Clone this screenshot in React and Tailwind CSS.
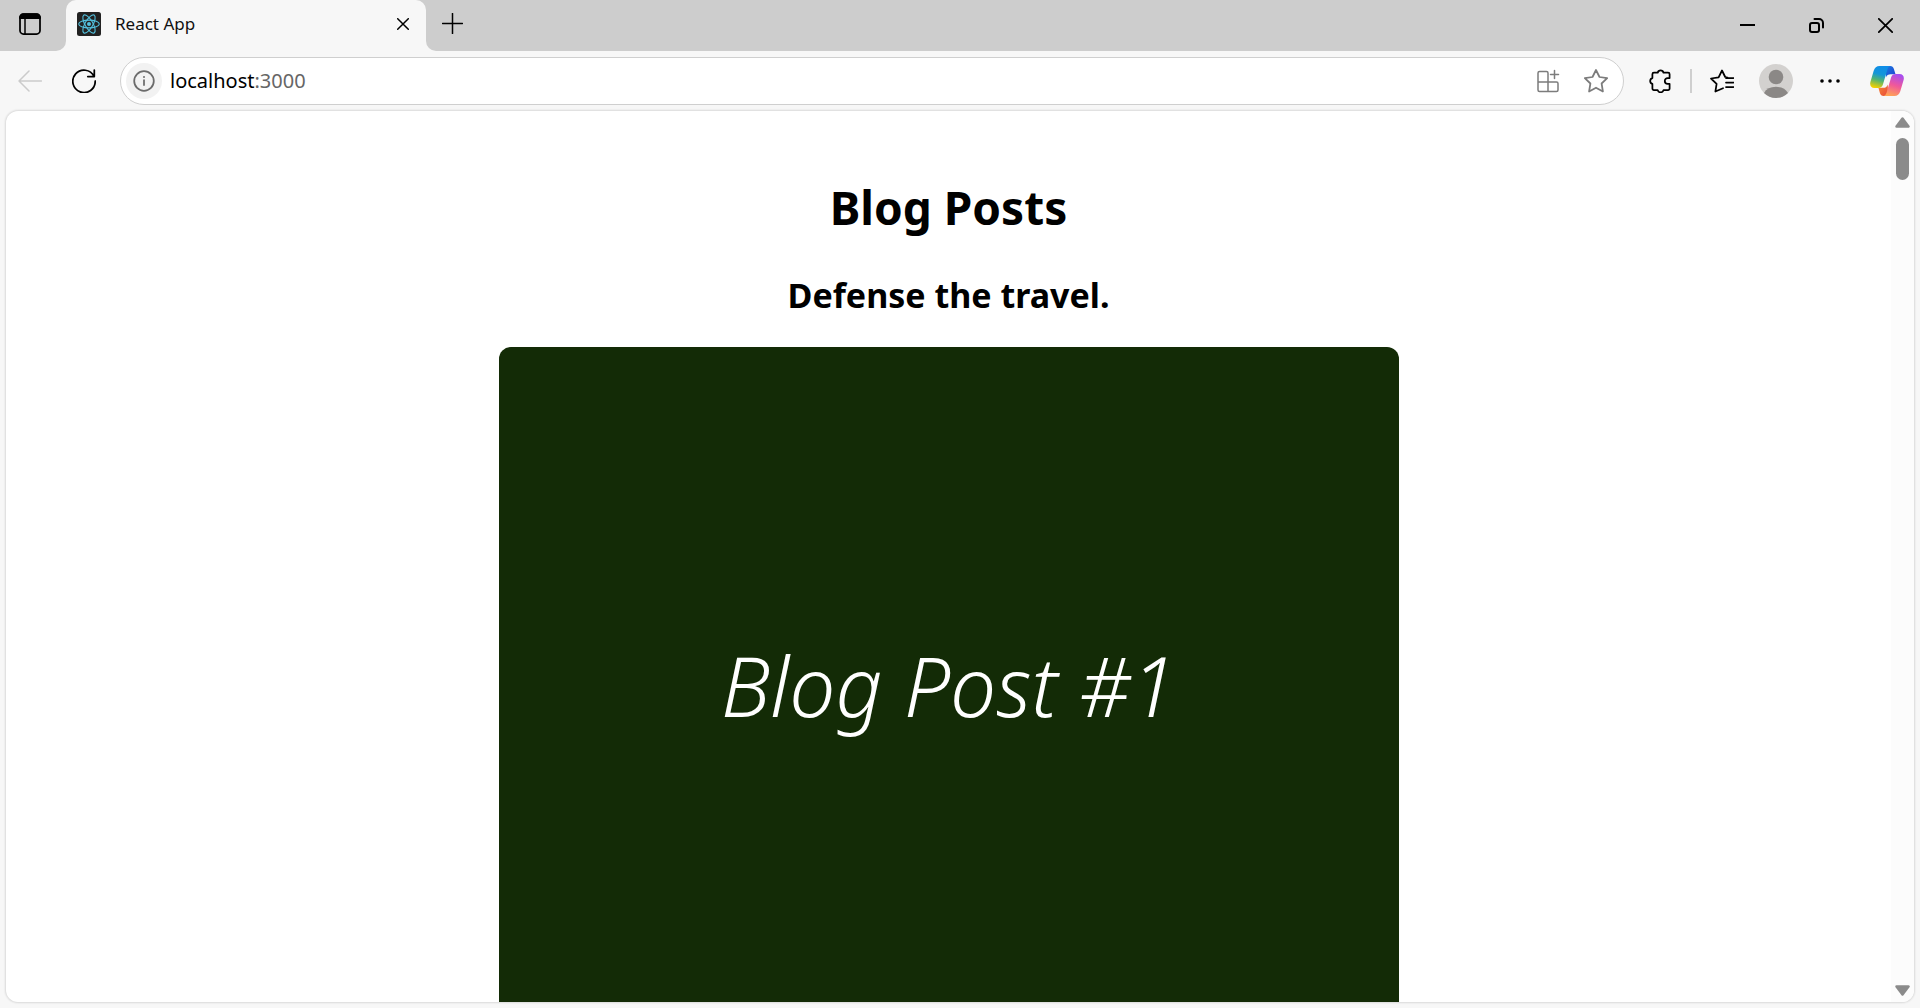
import React from "react";

const UI = "font-['Noto_Sans','Open_Sans',sans-serif]";

function Svg({ size = 24, width, height, stroke = 1.5, children, className = "" }) {
  return (
    <svg
      width={width ?? size}
      height={height ?? size}
      viewBox={`0 0 ${width ?? size} ${height ?? size}`}
      fill="none"
      stroke="currentColor"
      strokeWidth={stroke}
      strokeLinecap="round"
      strokeLinejoin="round"
      className={`shrink-0 ${className}`}
      aria-hidden="true"
    >
      {children}
    </svg>
  );
}

function IconButton({ label, className = "", children }) {
  return (
    <button type="button" aria-label={label} className={`flex shrink-0 items-center justify-center ${className}`}>
      {children}
    </button>
  );
}

function ReactLogo() {
  return (
    <svg width="24" height="24" viewBox="0 0 24 24" fill="none" stroke="#53c1de" strokeWidth="1.1" className="shrink-0" aria-hidden="true">
      <rect width="24" height="24" rx="2.5" fill="#222222" stroke="none" />
      <ellipse cx="12" cy="12" rx="10.3" ry="3.9" />
      <ellipse cx="12" cy="12" rx="10.3" ry="3.9" transform="rotate(60 12 12)" />
      <ellipse cx="12" cy="12" rx="10.3" ry="3.9" transform="rotate(120 12 12)" />
      <circle cx="12" cy="12" r="2" fill="#53c1de" stroke="none" />
    </svg>
  );
}

function CopilotLogo() {
  return (
    <svg width="34" height="30" viewBox="0 0 34 30" className="shrink-0" aria-hidden="true">
      <defs>
        <linearGradient id="cpLeft" x1="0.6" y1="0" x2="0.35" y2="1">
          <stop offset="0" stopColor="#0f8de8" />
          <stop offset="0.38" stopColor="#1496d8" />
          <stop offset="0.65" stopColor="#52b471" />
          <stop offset="1" stopColor="#f2d000" />
        </linearGradient>
        <linearGradient id="cpRight" x1="0.65" y1="0" x2="0.35" y2="1">
          <stop offset="0" stopColor="#a64df0" />
          <stop offset="0.5" stopColor="#f0589a" />
          <stop offset="1" stopColor="#ffa455" />
        </linearGradient>
        <linearGradient id="cpTop" x1="0" y1="0" x2="1" y2="1">
          <stop offset="0" stopColor="#1b7be0" />
          <stop offset="1" stopColor="#1d3fd0" />
        </linearGradient>
        <linearGradient id="cpBottom" x1="0" y1="0" x2="1" y2="1">
          <stop offset="0" stopColor="#f78a35" />
          <stop offset="1" stopColor="#e8483b" />
        </linearGradient>
      </defs>
      <path d="M16 0h4.2c2 0 3.1 1.1 3.7 3l1.6 5.2h-4.8c-2.5 0-3.9.9-4.8 3.4z" fill="url(#cpTop)" />
      <path d="M18 30h-4.4c-2 0-3.1-1.1-3.7-3l-1.5-5.2h4.5c2.5 0 4-.9 4.9-3.4z" fill="url(#cpBottom)" />
      <path d="M9.6 0H20.5c-1.700.4-2.600 1.700-3.200 3.700l-4.300 14.600c-.8 2.600-2.200 3.700-4.800 3.700H4.500C1 22-.5 19.300.4 16L3.700 4.800C4.700 1.600 6.500 0 9.600 0z" fill="url(#cpLeft)" />
      <path d="M24.400 30H13.500c1.700-.4 2.600-1.700 3.200-3.700L21 11.700c.8-2.600 2.200-3.700 4.800-3.700h3.700c3.500 0 5 2.700 4.100 6l-3.300 11.200c-1 3.200-2.800 4.800-5.900 4.800z" fill="url(#cpRight)" />
    </svg>
  );
}

function TitleBar() {
  return (
    <header className="flex h-[51px] shrink-0 bg-[#f7f7f7]">
      <div className="flex w-[66px] shrink-0 justify-center rounded-br-[10px] bg-[#cdcdcd] pr-[6px] pb-[3px]">
        <IconButton label="Tab actions menu" className="w-12">
          <Svg size={22} stroke={1.75}>
            <rect x="1" y="1" width="20" height="20" rx="3.5" />
            <path d="M1 5V4.500A3.500 3.500 0 0 1 4.500 1h13A3.500 3.500 0 0 1 21 4.500V5z" fill="currentColor" />
            <path d="M6 6v15" strokeWidth="1.5" />
          </Svg>
        </IconButton>
      </div>
      <div className="w-[360px] shrink-0 bg-[#cdcdcd]">
        <div className="flex h-full items-center rounded-t-[10px] bg-[#f7f7f7] pr-[11px] pb-[3px] pl-[11px]">
          <ReactLogo />
          <span className="ml-[14px] flex-1 text-[17px] leading-6 text-[#111]">React App</span>
          <IconButton label="Close tab" className="size-6">
            <Svg size={12}>
              <path d="M.7.7l10.600 10.600M11.300.7L.7 11.300" />
            </Svg>
          </IconButton>
        </div>
      </div>
      <div className="flex flex-1 justify-between rounded-bl-[10px] bg-[#cdcdcd]">
        <IconButton label="New tab" className="w-[53px] pb-1">
          <Svg size={21}>
            <path d="M10.500.5v20M.5 10.500h20" />
          </Svg>
        </IconButton>
        <div className="flex">
          <IconButton label="Minimize" className="w-[69px]">
            <Svg size={15} stroke={2}>
              <path d="M0 7h15" strokeLinecap="butt" />
            </Svg>
          </IconButton>
          <IconButton label="Restore" className="w-[69px]">
            <Svg size={15} stroke={2}>
              <rect x="1" y="5" width="9" height="9" rx="2" />
              <path d="M5.500 1h4.500a4 4 0 0 1 4 4v4.500" />
            </Svg>
          </IconButton>
          <IconButton label="Close" className="w-[69px]">
            <Svg size={15} stroke={1.75}>
              <path d="M.8.8l13.400 13.400M14.200.8L.8 14.200" />
            </Svg>
          </IconButton>
        </div>
      </div>
    </header>
  );
}

function AddressBar() {
  return (
    <div className="mx-[9px] flex h-12 min-w-0 flex-1 items-center rounded-full border border-[#cfcfcf] bg-white pr-[3px] pl-[5px]">
      <IconButton label="View site information" className="size-9 rounded-full bg-[#f2f2f2] text-[#6b6b6b]">
        <Svg size={22} stroke={1.75}>
          <circle cx="11" cy="11" r="9.8" />
          <path d="M11 10v5" />
          <circle cx="11" cy="7" r="1" fill="currentColor" stroke="none" />
        </Svg>
      </IconButton>
      <a href="#top" className="ml-2 flex-1 truncate text-[20px] leading-7 text-black">
        localhost<span className="text-[#666]">:3000</span>
      </a>
      <IconButton label="App available" className="h-9 w-12 text-[#7c7c7c]">
        <Svg size={24}>
          <path d="M12 13V4a1.500 1.500 0 0 0-1.500-1.500H3.500A1.500 1.500 0 0 0 2 4v17a1.500 1.500 0 0 0 1.500 1.500h17A1.500 1.500 0 0 0 22 21v-6.500a1.500 1.500 0 0 0-1.500-1.500H2M12 13v9.500M18.500 1.500v8M14.500 5.500h8" />
        </Svg>
      </IconButton>
      <IconButton label="Add this page to favorites" className="h-9 w-12 text-[#7c7c7c]">
        <Svg size={24} stroke={1.75}>
          <path d="M12 1l3.500 7 7.700 1.100-5.600 5.400 1.300 8-6.900-3.800-6.900 3.800 1.300-8L.8 9.100l7.700-1.100z" />
        </Svg>
      </IconButton>
    </div>
  );
}

function Toolbar() {
  return (
    <nav aria-label="Browser toolbar" className="flex h-[60px] shrink-0 items-center bg-[#f7f7f7] pr-[6px] pl-[3px] text-black">
      <IconButton label="Back" className="h-12 w-[54px] text-[#cbcbcb]">
        <Svg size={24}>
          <path d="M23.500 12H1M11 2L1 12l10 10" />
        </Svg>
      </IconButton>
      <IconButton label="Refresh" className="h-12 w-[54px]">
        <Svg size={24} stroke={1.75}>
          <path d="M22 7.300A11.200 11.200 0 1 0 23.200 12M22.300 1v6.500h-6.500" />
        </Svg>
      </IconButton>
      <AddressBar />
      <IconButton label="Extensions" className="h-12 w-[54px]">
        <Svg size={24} stroke={1.75}>
          <path d="M9.700 3.700a3 3 0 0 1 5.800 0h4.600a1.500 1.500 0 0 1 1.500 1.500v3.900h-1.900a2.900 2.900 0 0 0 0 5.800h1.900v4.700a1.500 1.500 0 0 1-1.500 1.500h-4.600a3 3 0 0 1-5.800 0H5.900a1.500 1.500 0 0 1-1.500-1.500v-4.700a3 3 0 0 1 0-5.800V5.200a1.500 1.500 0 0 1 1.500-1.500z" />
        </Svg>
      </IconButton>
      <span className="mx-[3px] h-6 w-0.5 shrink-0 bg-[#cfcfcf]" />
      <IconButton label="Favorites" className="h-12 w-[54px]">
        <Svg size={24} stroke={1.75}>
          <path d="M13 19.200L5.400 22.500 6.600 14.800 1 9.500l7.600-1.200L12 1.500l3.200 6.500 2.300.5M16 9h7.500M16 13.500h7.500M16 18h7.500" />
        </Svg>
      </IconButton>
      <IconButton label="Profile" className="h-12 w-[54px]">
        <svg width="34" height="34" viewBox="0 0 34 34" aria-hidden="true">
          <circle cx="17" cy="17" r="17" fill="#d3d1cf" />
          <circle cx="17" cy="13" r="7.3" fill="#8b8886" />
          <path d="M5 29a13 10 0 0 1 24 0A17 17 0 0 1 5 29z" fill="#8b8886" />
        </svg>
      </IconButton>
      <IconButton label="Settings and more" className="h-12 w-[54px]">
        <svg width="20" height="4" viewBox="0 0 20 4" fill="currentColor" aria-hidden="true">
          <circle cx="2" cy="2" r="1.8" />
          <circle cx="10" cy="2" r="1.8" />
          <circle cx="18" cy="2" r="1.8" />
        </svg>
      </IconButton>
      <IconButton label="Copilot" className="ml-[3px] h-12 w-[54px]">
        <CopilotLogo />
      </IconButton>
    </nav>
  );
}

function Scrollbar() {
  return (
    <div className="flex w-[23px] shrink-0 flex-col items-center bg-[#fcfcfc] py-[6px] text-[#8b8b8b]">
      <IconButton label="Scroll up">
        <Svg width={15} height={11}>
          <path d="M7.500 1.500L13.500 9.500h-12z" fill="currentColor" strokeWidth="2.5" />
        </Svg>
      </IconButton>
      <span className="mt-2.5 h-[42px] w-[13px] rounded-full bg-[#8b8b8b]" />
      <span className="flex-1" />
      <IconButton label="Scroll down">
        <Svg width={15} height={11}>
          <path d="M7.500 9.500L13.500 1.500h-12z" fill="currentColor" strokeWidth="2.5" />
        </Svg>
      </IconButton>
    </div>
  );
}

function BlogPost({ title, caption }) {
  return (
    <article className="mt-8 flex w-full flex-col items-center">
      <h2 className="text-[34px] leading-[48px] font-bold">{title}</h2>
      <div className="mt-7 flex aspect-[4/3] w-full max-w-[900px] items-center justify-center rounded-xl bg-[#132b06]">
        <span className="text-[82px] leading-[106px] font-light text-white italic">{caption}</span>
      </div>
    </article>
  );
}

export default function App() {
  return (
    <div className={`flex h-screen flex-col overflow-hidden bg-[#f7f7f7] ${UI}`}>
      <TitleBar />
      <Toolbar />
      <div className="mx-[6px] mb-[6px] flex min-h-0 flex-1 overflow-hidden rounded-xl bg-white shadow-[0_0_2px_1px_rgba(0,0,0,0.12)]">
        <main id="top" className="flex min-w-0 flex-1 flex-col items-center overflow-hidden pt-16 text-black">
          <h1 className="text-[46px] leading-[64px] font-bold">Blog Posts</h1>
          <BlogPost title="Defense the travel." caption="Blog Post #1" />
        </main>
        <Scrollbar />
      </div>
    </div>
  );
}
